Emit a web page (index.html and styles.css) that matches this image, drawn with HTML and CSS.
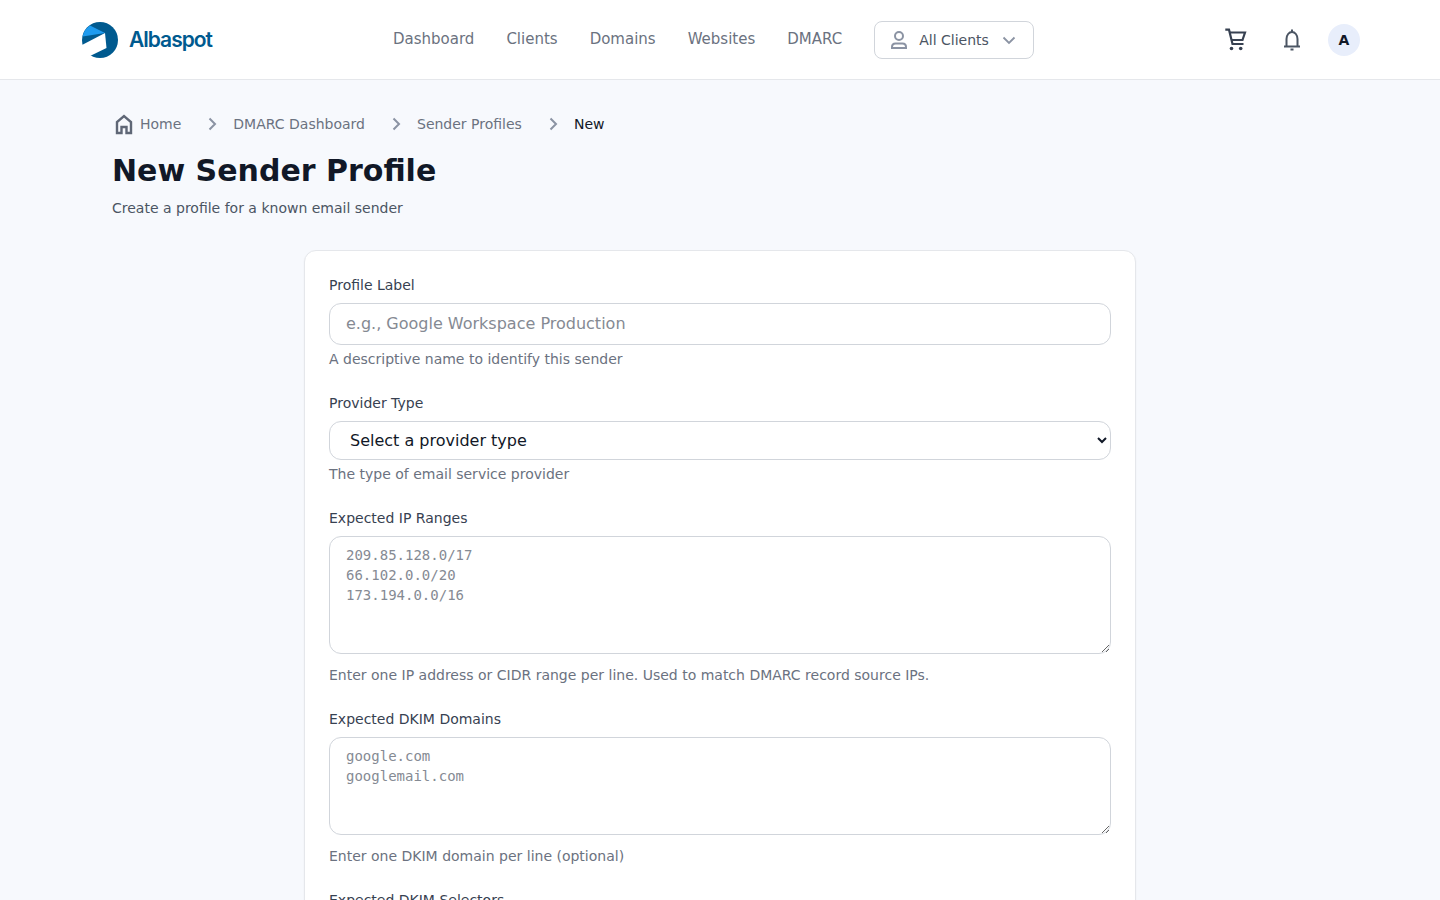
FILE: index.html
```html
<!DOCTYPE html>
<html lang="en">
<head>
<meta charset="utf-8">
<title>New Sender Profile</title>
<link rel="stylesheet" href="styles.css">
</head>
<body>
<header class="topbar">
  <a class="logo" href="#">
    <svg class="logo-mark" width="36" height="36" viewBox="0 0 36 36">
      <circle cx="18" cy="18" r="18" fill="#005a8f"/>
      <path d="M23 11 L24.500 26 L8 34 L-1 31 L0 23 Z" fill="#fff"/>
      <path d="M0.600 14.500 C1.500 10 4 6 8 3.500 L23 11 Z" fill="#1e9bef"/>
    </svg>
    <span class="logo-text">Albaspot</span>
  </a>
  <nav class="nav">
    <a href="#">Dashboard</a>
    <a href="#">Clients</a>
    <a href="#">Domains</a>
    <a href="#">Websites</a>
    <a href="#">DMARC</a>
    <button class="client-picker" type="button">
      <svg width="24" height="24" viewBox="0 0 24 24" fill="none" stroke="#8b93a3" stroke-width="2"><circle cx="12" cy="8" r="4"/><path d="M5 20v-1c0-2 1.500-3.500 3.500-3.500h7c2 0 3.500 1.500 3.500 3.500v1z"/></svg>
      <span class="client-name">All Clients</span>
      <svg class="client-chevron" width="16" height="16" viewBox="0 0 16 16" fill="none" stroke="#8b93a3" stroke-width="1.800"><path d="M2.500 5.500 8 11l5.500-5.500"/></svg>
    </button>
  </nav>
  <div class="actions">
    <svg width="24" height="24" viewBox="0 0 24 24" fill="none" stroke="#374151" stroke-width="2.200"><path d="M1.300 1.700H5L8.500 16H19.500"/><path d="M6 4.500h15L18.500 12H8"/><circle cx="7.500" cy="20.500" r="1.800" fill="#374151" stroke="none"/><circle cx="16.700" cy="20.500" r="1.800" fill="#374151" stroke="none"/></svg>
    <svg width="24" height="24" viewBox="0 0 24 24" fill="none" stroke="#4b5563" stroke-width="2"><path d="M6.500 18V11C6.500 7 9 4 12 4s5.500 3 5.500 7v7"/><path d="M4 18.500h16"/><path d="M12 1.500V4"/><path d="M10.500 21.500h3"/></svg>
    <span class="avatar">A</span>
  </div>
</header>
<main class="page">
  <nav class="crumbs">
    <a class="crumb" href="#">
      <svg width="24" height="24" viewBox="0 0 24 24" fill="none" stroke="#5f6776" stroke-width="2.400"><path d="M5 21V10l7-6 7 6v11h-4.500v-6h-5v6z"/></svg>
      Home
    </a>
    <svg class="sep" width="16" height="16" viewBox="0 0 16 16" fill="none" stroke="#8b93a3" stroke-width="2"><path d="M5.500 2.500 11 8l-5.500 5.500"/></svg>
    <a class="crumb" href="#">DMARC Dashboard</a>
    <svg class="sep" width="16" height="16" viewBox="0 0 16 16" fill="none" stroke="#8b93a3" stroke-width="2"><path d="M5.500 2.500 11 8l-5.500 5.500"/></svg>
    <a class="crumb" href="#">Sender Profiles</a>
    <svg class="sep" width="16" height="16" viewBox="0 0 16 16" fill="none" stroke="#8b93a3" stroke-width="2"><path d="M5.500 2.500 11 8l-5.500 5.500"/></svg>
    <span class="crumb current">New</span>
  </nav>
  <h1>New Sender Profile</h1>
  <p class="lead">Create a profile for a known email sender</p>
  <form class="card">
    <div class="field">
      <label>Profile Label</label>
      <input type="text" placeholder="e.g., Google Workspace Production">
      <small>A descriptive name to identify this sender</small>
    </div>
    <div class="field">
      <label>Provider Type</label>
      <select><option>Select a provider type</option></select>
      <small>The type of email service provider</small>
    </div>
    <div class="field">
      <label>Expected IP Ranges</label>
      <textarea class="tall" placeholder="209.85.128.0/17&#10;66.102.0.0/20&#10;173.194.0.0/16"></textarea>
      <small>Enter one IP address or CIDR range per line. Used to match DMARC record source IPs.</small>
    </div>
    <div class="field">
      <label>Expected DKIM Domains</label>
      <textarea class="short" placeholder="google.com&#10;googlemail.com"></textarea>
      <small>Enter one DKIM domain per line (optional)</small>
    </div>
    <div class="field">
      <label>Expected DKIM Selectors</label>
      <textarea class="short"></textarea>
    </div>
  </form>
</main>
</body>
</html>
```
FILE: styles.css
```css
* { box-sizing: border-box; }
html, body { margin: 0; height: 900px; overflow: hidden; }
body { background: #f7f9fd; font-family: "DejaVu Sans", sans-serif; color: #111827; }
a { text-decoration: none; color: inherit; }
.topbar { height: 80px; background: #fff; border-bottom: 1px solid #e5e7eb; padding: 0 80px 0 82px; display: flex; align-items: center; }
.logo { display: flex; align-items: center; gap: 11px; width: 311px; }
.logo-mark { flex: none; }
.logo-text { font-family: "Inter", sans-serif; font-size: 21px; font-weight: 600; color: #005a8f; letter-spacing: -1px; }
.nav { display: flex; align-items: center; gap: 32px; font-size: 15px; line-height: 20px; color: #6b7280; }
.nav a { padding-bottom: 2px; }
.client-picker { width: 160px; height: 38px; border: 1px solid #d1d5db; border-radius: 8px; background: #fff; display: flex; align-items: center; padding: 0 0 0 12px; font: 14px "DejaVu Sans", sans-serif; color: #4b5563; }
.client-name { margin-left: 8px; }
.client-chevron { margin-left: 12px; }
.actions { margin-left: auto; display: flex; align-items: center; gap: 32px; }
.avatar { width: 32px; height: 32px; margin-left: -8px; border-radius: 50%; background: #e8eefb; display: flex; align-items: center; justify-content: center; font-size: 14px; font-weight: 700; color: #111827; }
.page { width: 1216px; margin: 0 auto; padding-top: 32px; }
.crumbs { display: flex; align-items: center; font-size: 14px; color: #6b7280; height: 24px; }
.crumb { display: flex; align-items: center; gap: 4px; }
.crumbs .sep { margin: 0 13px 0 23px; }
.current { color: #111827; }
h1 { margin: 17px 0 0; font-size: 30px; line-height: 36px; font-weight: 700; color: #111827; }
.lead { margin: 9px 0 0; font-size: 14px; line-height: 20px; color: #4b5563; }
.card { width: 832px; margin: 32px auto 0; background: #fff; border: 1px solid #e5e7eb; border-radius: 12px; padding: 24px; box-shadow: 0 1px 2px rgba(0,0,0,.05); height: 800px; }
.field { margin-bottom: 24px; }
label { display: block; font-size: 14px; line-height: 20px; color: #374151; margin-bottom: 8px; }
small { display: block; font-size: 14px; line-height: 20px; color: #6b7280; margin-top: 4px; }
input, select, textarea { width: 100%; background: #fff; border: 1px solid #d1d5db; border-radius: 12px; }
input, select { display: block; }
input { height: 42px; padding: 0 16px 2px; font: 16px "DejaVu Sans", sans-serif; }
input::placeholder, textarea::placeholder { color: #858a93; opacity: 1; }
select { height: 39px; padding: 0 16px; font: 16px "DejaVu Sans", sans-serif; color: #111827; }
textarea { padding: 8px 16px; margin-bottom: 3px; font: 14px/20px "DejaVu Sans Mono", monospace; }
.tall { height: 118px; }
.short { height: 98px; }
```
